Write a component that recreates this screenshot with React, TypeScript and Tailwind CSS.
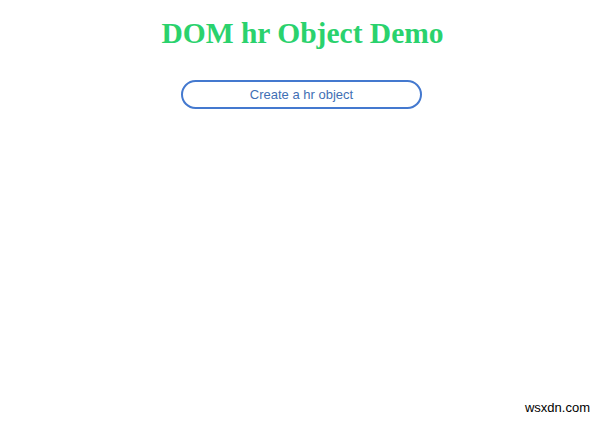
export default function App() {
  return (
    <div className="w-[600px] h-[425px] bg-white flex flex-col items-center relative">
      <h1 className="mt-[15px] ml-[5px] text-[29.5px] leading-[36px] font-bold text-[#2ad26d] font-['Liberation_Serif',serif]">
        DOM hr Object Demo
      </h1>
      <button className="mt-[29px] ml-[3px] w-[241px] h-[29px] rounded-full border-2 border-[#4479cf] text-[13px] text-[#3f6fb4] font-['Liberation_Sans',Arial,sans-serif] flex items-center justify-center">
        Create a hr object
      </button>
      <div className="absolute right-[10px] bottom-[8px] text-[13px] text-black font-['Liberation_Sans',Arial,sans-serif]">
        wsxdn.com
      </div>
    </div>
  );
}
